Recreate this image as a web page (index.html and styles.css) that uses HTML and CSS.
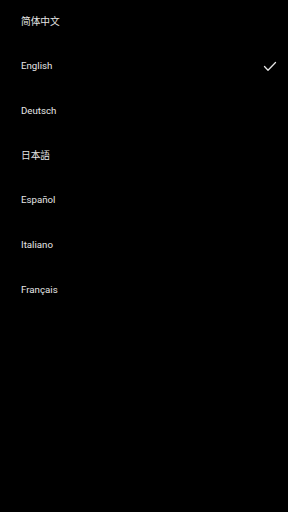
FILE: index.html
```html
<html>
	<head>
		<link rel="stylesheet" href="styles.css">
	</head>
	<body>
		<ul class="languages">
			<li class="item">简体中文</li>
			<li class="item">
				English
				<svg class="check" width="14" height="11" viewBox="0 0 14 11">
					<path d="M1.5 5.5 L5 9.2 L12.5 1.5" fill="none" stroke="#e6e6e6" stroke-width="1.3" stroke-linecap="round" stroke-linejoin="round"/>
				</svg>
			</li>
			<li class="item">Deutsch</li>
			<li class="item">日本語</li>
			<li class="item">Español</li>
			<li class="item">Italiano</li>
			<li class="item">Français</li>
		</ul>
	</body>
</html>
```

FILE: styles.css
```css
body{
	margin: 0;
	background: #000;
	color: #e6e6e6;
	font-family: Roboto, "Noto Sans CJK SC", sans-serif;
	width: 288px;
	height: 512px;
	overflow: hidden;
}
.languages{
	list-style-type: none;
	margin: -1px 0 0 0;
	padding: 0;
}
.item{
	height: 44.67px;
	display: flex;
	align-items: center;
	justify-content: space-between;
	padding: 0 11px 0 21px;
	font-size: 9.7px;
}
.check{
	display: block;
	margin-top: 2px;
}
```
